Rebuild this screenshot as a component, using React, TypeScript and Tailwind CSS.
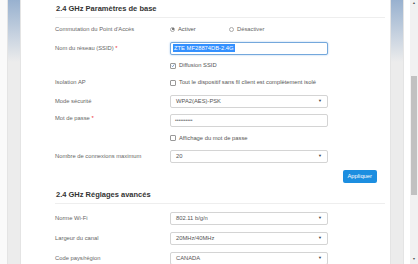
import React from "react";

const font = { fontFamily: '"Liberation Sans", Arial, sans-serif' };

function Strip() {
  return (
    <div className="w-[14px] h-full bg-[#ececec] border-x border-[#e4e4e4] flex flex-col">
      <div className="h-[62px] bg-gradient-to-b from-[#98b1cf] to-[#ececec]" />
    </div>
  );
}

function Label({ children, req }: { children: React.ReactNode; req?: boolean }) {
  return (
    <div className="w-[115px] shrink-0 text-[5.8px] text-[#666]">
      {children}
      {req && <span className="text-[#e33]"> *</span>}
    </div>
  );
}

function Select({ value }: { value: string }) {
  return (
    <div className="w-[158px] h-[13px] border border-[#d4d4d4] rounded-[2px] flex items-center justify-between px-[5px] text-[5.8px] text-[#555] bg-white">
      <span>{value}</span>
      <span className="text-[4px] text-[#444]">▼</span>
    </div>
  );
}

function Check({ checked }: { checked?: boolean }) {
  return (
    <span className="w-[6px] h-[6px] border border-[#999] rounded-[1px] bg-white flex items-center justify-center mr-[3px]">
      {checked && (
        <svg width="5" height="5" viewBox="0 0 10 10">
          <path d="M1.5 5.5 L4 8 L8.5 2" stroke="#3a6fb8" strokeWidth="1.6" fill="none" />
        </svg>
      )}
    </span>
  );
}

function Radio({ on }: { on?: boolean }) {
  return (
    <span className="w-[5px] h-[5px] rounded-full border border-[#aaa] bg-white flex items-center justify-center mr-[3px]">
      {on && <span className="w-[2px] h-[2px] rounded-full bg-[#555]" />}
    </span>
  );
}

export default function App() {
  return (
    <div className="w-[418px] h-[264px] overflow-hidden flex bg-white" style={font}>
      <div className="w-[7px] h-full bg-[#fafafa]" />
      <Strip />
      <div className="w-[369px] h-full pl-[34px] pr-[5px] flex flex-col">
        <div className="h-[18px] shrink-0 border-b border-[#eee] flex items-center pl-[1px] pt-[1px] text-[7.5px] font-bold text-[#333]">
          2.4 GHz Paramètres de base
        </div>
        <div className="h-[21px] shrink-0 flex items-center pt-[1px]">
          <Label>Commutation du Point d'Accès</Label>
          <div className="flex items-center text-[5.8px] text-[#555]">
            <div className="flex items-center w-[59px]">
              <Radio on />
              Activer
            </div>
            <div className="flex items-center text-[#666]">
              <Radio />
              Désactiver
            </div>
          </div>
        </div>
        <div className="h-[18px] shrink-0 flex items-center">
          <Label req>Nom du réseau (SSID)</Label>
          <div className="w-[158px] h-[13px] border border-[#74a8dc] rounded-[2px] shadow-[0_0_2px_#9cc3ea] flex items-center px-[2px] text-[5.8px] bg-white">
            <span className="bg-[#3390ff] text-white px-[1px]">ZTE MF28874DB-2.4G</span>
          </div>
        </div>
        <div className="h-[17px] shrink-0 flex items-center">
          <Label> </Label>
          <div className="flex items-center text-[5.8px] text-[#555]">
            <Check checked />
            Diffusion SSID
          </div>
        </div>
        <div className="h-[17px] shrink-0 flex items-center">
          <Label>Isolation AP</Label>
          <div className="flex items-center text-[5.8px] text-[#555] whitespace-nowrap">
            <Check />
            Tout le dispositif sans fil client est complètement isolé
          </div>
        </div>
        <div className="h-[20px] shrink-0 flex items-center">
          <Label>Mode sécurité</Label>
          <Select value="WPA2(AES)-PSK" />
        </div>
        <div className="h-[19px] shrink-0 flex items-center">
          <div className="w-[115px] shrink-0 text-[5.8px] text-[#666] -mt-[4px]">
            Mot de passe<span className="text-[#e33]"> *</span>
          </div>
          <div className="w-[158px] h-[13px] border border-[#d4d4d4] rounded-[2px] flex items-center px-[4px] text-[5px] text-[#777] bg-white">
            ••••••••••
          </div>
        </div>
        <div className="h-[16px] shrink-0 flex items-center">
          <Label> </Label>
          <div className="flex items-center text-[5.8px] text-[#555]">
            <Check />
            Affichage du mot de passe
          </div>
        </div>
        <div className="h-[20px] shrink-0 flex items-center">
          <Label>Nombre de connexions maximum</Label>
          <Select value="20" />
        </div>
        <div className="h-[20px] shrink-0 flex items-center justify-end pr-[8px]">
          <div className="h-[13px] px-[5px] rounded-[2px] bg-[#1c8ee0] text-white text-[5.8px] flex items-center">
            Appliquer
          </div>
        </div>
        <div className="h-[18px] shrink-0 border-b border-[#eee] flex items-center pl-[1px] text-[7.5px] font-bold text-[#333]">
          2.4 GHz Réglages avancés
        </div>
        <div className="h-[4px] shrink-0" />
        <div className="h-[20px] shrink-0 flex items-center">
          <Label>Norme Wi-Fi</Label>
          <Select value="802.11 b/g/n" />
        </div>
        <div className="h-[20px] shrink-0 flex items-center">
          <Label>Largeur du canal</Label>
          <Select value="20MHz/40MHz" />
        </div>
        <div className="h-[20px] shrink-0 flex items-center">
          <Label>Code pays/région</Label>
          <Select value="CANADA" />
        </div>
      </div>
      <Strip />
      <div className="w-[6px] h-full bg-white" />
      <div className="w-[8px] h-full bg-[#f1f1f1] flex flex-col items-center">
        <div className="h-[8px] flex items-center text-[3.5px] text-[#555]">▲</div>
        <div className="h-[68px]" />
        <div className="w-[6px] h-[119px] bg-[#c1c1c1]" />
        <div className="flex-1" />
        <div className="h-[8px] flex items-center text-[3.5px] text-[#555]">▼</div>
      </div>
    </div>
  );
}
